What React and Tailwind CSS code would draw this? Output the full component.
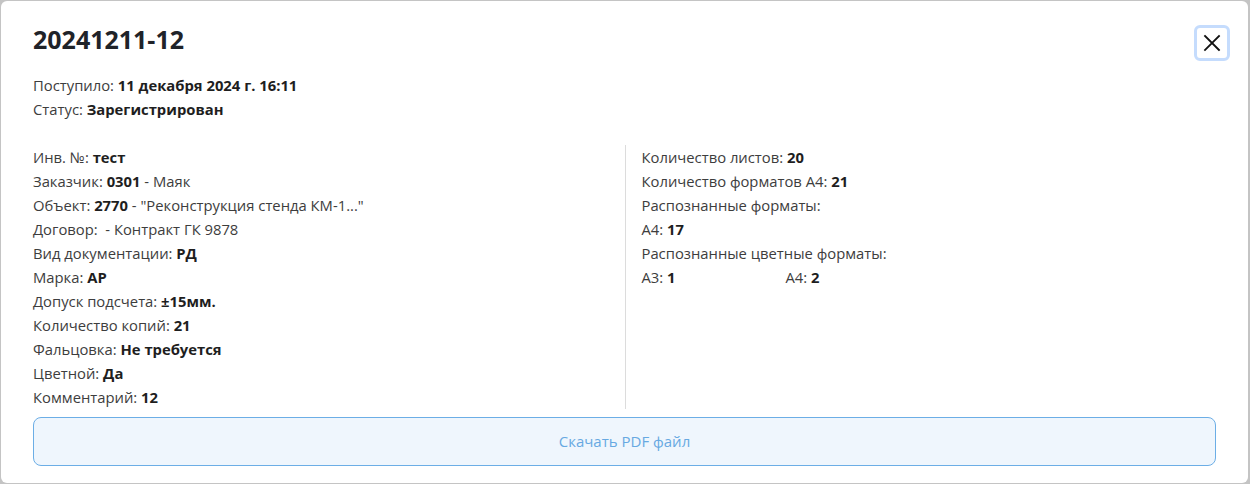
import React from "react";

const L = ({ label, children }) => (
  <div className="h-6 leading-6 whitespace-nowrap">
    <span className="text-[#3d3d3d]">{label}</span>
    {children}
  </div>
);
const B = ({ children }) => <span className="font-bold text-[#1e1e1e]">{children}</span>;

export default function App() {
  return (
    <div className="h-[484px] w-[1250px] bg-[#c4c4c4] p-[1px] overflow-hidden" style={{ fontFamily: '"Open Sans", "Noto Sans", sans-serif' }}>
      <div className="relative h-[482px] w-[1247px] rounded-md bg-white px-8 pt-[22px] text-[14.8px] text-[#3d3d3d]">
        <h1 className="h-8 leading-8 text-[25px] font-bold text-[#1f2329]">20241211-12</h1>
        <button className="absolute right-[18px] top-[24px] flex h-9 w-9 items-center justify-center rounded-md border-[3px] border-[#c5dcfd] bg-white">
          <svg width="20" height="20" viewBox="0 0 20 20" fill="none" stroke="#111" strokeWidth="1.8" strokeLinecap="square">
            <path d="M3 3L17 17M17 3L3 17" />
          </svg>
        </button>
        <div className="mt-[18px]">
          <L label="Поступило: "><B>11 декабря 2024 г. 16:11</B></L>
          <L label="Статус: "><B>Зарегистрирован</B></L>
        </div>
        <div className="mt-6 grid grid-cols-2">
          <div>
            <L label="Инв. №: "><B>тест</B></L>
            <L label="Заказчик: "><B>0301</B> - Маяк</L>
            <L label="Объект: "><B>2770</B> - "Реконструкция стенда КМ-1..."</L>
            <L label="Договор: ">&nbsp;- Контракт ГК 9878</L>
            <L label="Вид документации: "><B>РД</B></L>
            <L label="Марка: "><B>АР</B></L>
            <L label="Допуск подсчета: "><B>±15мм.</B></L>
            <L label="Количество копий: "><B>21</B></L>
            <L label="Фальцовка: "><B>Не требуется</B></L>
            <L label="Цветной: "><B>Да</B></L>
            <L label="Комментарий: "><B>12</B></L>
          </div>
          <div className="border-l border-[#dcdcdc] pl-4">
            <L label="Количество листов: "><B>20</B></L>
            <L label="Количество форматов А4: "><B>21</B></L>
            <L label="Распознанные форматы:" />
            <L label="А4: "><B>17</B></L>
            <L label="Распознанные цветные форматы:" />
            <div className="grid grid-cols-[144px_144px]">
              <L label="А3: "><B>1</B></L>
              <L label="А4: "><B>2</B></L>
            </div>
          </div>
        </div>
        <button className="mt-2 flex h-[49px] w-full items-center justify-center rounded-lg border border-[#6caee6] bg-[#eff6fd] text-[15px] text-[#67a9e2]">
          Скачать PDF файл
        </button>
      </div>
    </div>
  );
}
